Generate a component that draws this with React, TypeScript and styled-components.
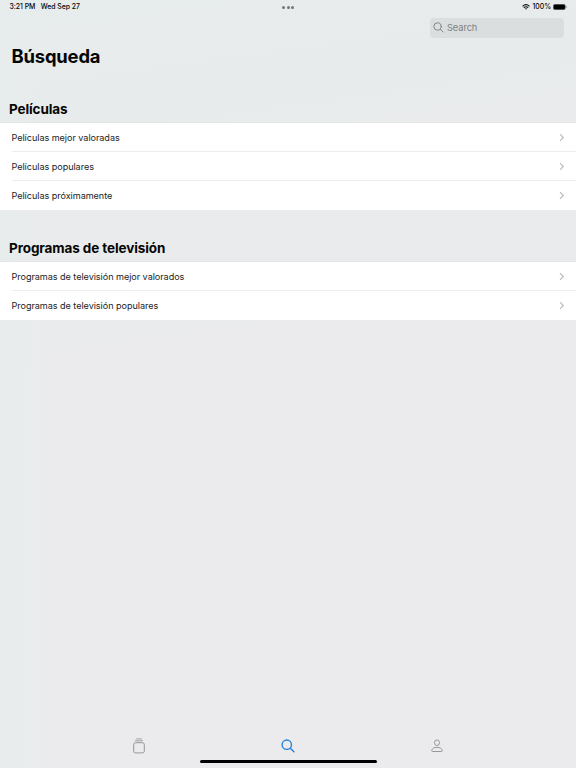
import React from 'react';
import styled, { createGlobalStyle } from 'styled-components';

const GlobalStyle = createGlobalStyle`
  * { box-sizing: border-box; }
  html, body { margin: 0; padding: 0; }
  body { font-family: Inter, "Liberation Sans", sans-serif; color: #050606; overflow: hidden; }
  h1, h2, ul { margin: 0; padding: 0; }
`;

const Screen = styled.div`
  width: 576px;
  height: 768px;
  display: flex;
  flex-direction: column;
  background:
    linear-gradient(90deg, #e7ecec 0, #e7ecec00 46px),
    linear-gradient(172deg, #e7ecec 0, #e8ebec 130px, #eaebec 230px, #ebebed 400px);
`;

const StatusBar = styled.div`
  height: 14px;
  flex: none;
  display: grid;
  grid-template-columns: 1fr auto 1fr;
  align-items: center;
  padding: 0 9px 0 9.5px;
  font-size: 6.9px;
  font-weight: 500;
  line-height: 14px;
`;

const Clock = styled.div`
  display: flex;
  gap: 5.5px;
  letter-spacing: -0.04px;
`;

const Dots = styled.div`
  display: flex;
  gap: 1.6px;
  span { width: 3px; height: 3px; border-radius: 50%; background: #727676; }
`;

const Indicators = styled.div`
  display: flex;
  justify-content: flex-end;
  align-items: center;
  gap: 2px;
`;

const SearchRow = styled.div`
  flex: none;
  display: flex;
  justify-content: flex-end;
  padding: 4px 12px 0 0;
`;

const SearchField = styled.div`
  width: 134px;
  height: 20px;
  border-radius: 4px;
  background: #dadedf;
  color: #7e8283;
  display: flex;
  align-items: center;
  gap: 3px;
  padding: 0 0 1px 3px;
  font-size: 9.3px;
  letter-spacing: -0.1px;
`;

const Title = styled.h1`
  flex: none;
  height: 59px;
  padding: 6px 0 0 11.5px;
  font-size: 18.4px;
  line-height: 24px;
  font-weight: 700;
  letter-spacing: -0.17px;
`;

const Section = styled.section`
  flex: none;
  margin-bottom: 26px;
`;

const SectionTitle = styled.h2`
  height: 25px;
  padding-left: 9px;
  font-size: 13.5px;
  line-height: 24px;
  font-weight: 700;
  letter-spacing: -0.1px;
`;

const List = styled.ul`
  list-style: none;
  background: #fff;
  border-top: 1px solid #e3e5e6;
`;

const Item = styled.li`
  height: 29px;
  display: flex;
  align-items: center;
  justify-content: space-between;
  margin-left: 11.5px;
  padding-right: 11px;
  font-size: 9.1px;
  letter-spacing: -0.05px;
  color: #232425;
  &:not(:last-child) { border-bottom: 1px solid #ececee; }
`;

const TabBar = styled.nav`
  flex: none;
  margin-top: auto;
  height: 30px;
  padding-top: 2px;
  display: grid;
  grid-template-columns: repeat(3, 149px);
  justify-content: center;
  justify-items: center;
  align-items: center;
`;

const HomeBar = styled.div`
  flex: none;
  width: 177px;
  height: 3px;
  border-radius: 2px;
  margin: 0 auto 5px;
  background: #000;
`;

const Chevron = () => (
  <svg width="6" height="9" viewBox="0 0 6 9" fill="none" stroke="#b9b9bc" strokeWidth="1.1">
    <path d="M1 1.2 4.3 4.5 1 7.8" />
  </svg>
);

const Wifi = () => (
  <svg width="8" height="6" viewBox="0 0 8 6" fill="none" stroke="#111" strokeWidth="1.1">
    <path d="M.5 2.3Q4-.9 7.5 2.3M1.8 3.7q2.2-1.8 4.4 0" />
    <path d="M2.9 4.6Q4 3.8 5.1 4.6L4 5.8Z" fill="#111" stroke="none" />
  </svg>
);

const Battery = () => (
  <svg width="14" height="6" viewBox="0 0 14 6">
    <rect x=".3" y=".3" width="12" height="5.4" rx="1.6" fill="#000" stroke="#777" strokeWidth=".5" />
    <path d="M13 2v2q.8-.2.8-1T13 2Z" fill="#888" />
  </svg>
);

const Magnifier = ({ size, color, weight }: { size: number; color: string; weight: number }) => (
  <svg width={size} height={size} viewBox="0 0 14 14" fill="none" stroke={color} strokeWidth={weight} strokeLinecap="round">
    <circle cx="5.8" cy="5.7" r="4.7" />
    <path d="m9.3 9.2 3.6 3.6" />
  </svg>
);

const Library = () => (
  <svg width="14" height="16" viewBox="0 0 14 16" fill="none" stroke="#97979a" strokeWidth="1">
    <rect x="1.7" y="4.7" width="10.6" height="10.2" rx="1.8" />
    <path d="M3 2.8h8M4.2.9h5.6" strokeWidth=".9" />
  </svg>
);

const Person = () => (
  <svg width="14" height="14" viewBox="0 0 14 14" fill="none" stroke="#97979a" strokeWidth="1">
    <ellipse cx="7" cy="3.7" rx="2.5" ry="2.8" />
    <path d="M2.7 12.5q-1.2 0-1-1.1C2.2 9.4 4.2 8.3 7 8.3s4.8 1.1 5.3 3.1q.2 1.1-1 1.1Z" />
  </svg>
);

const sections = [
  { title: 'Películas', items: ['Películas mejor valoradas', 'Películas populares', 'Películas próximamente'] },
  { title: 'Programas de televisión', items: ['Programas de televisión mejor valorados', 'Programas de televisión populares'] },
];

export default function App() {
  return (
    <>
      <GlobalStyle />
      <Screen>
        <StatusBar>
          <Clock><span>3:21 PM</span><span>Wed Sep 27</span></Clock>
          <Dots><span /><span /><span /></Dots>
          <Indicators><Wifi /><span>100%</span><Battery /></Indicators>
        </StatusBar>
        <SearchRow>
          <SearchField><Magnifier size={11} color="#7e8283" weight={1.2} /><span>Search</span></SearchField>
        </SearchRow>
        <Title>Búsqueda</Title>
        {sections.map((section) => (
          <Section key={section.title}>
            <SectionTitle>{section.title}</SectionTitle>
            <List>
              {section.items.map((item) => (
                <Item key={item}><span>{item}</span><Chevron /></Item>
              ))}
            </List>
          </Section>
        ))}
        <TabBar>
          <Library />
          <Magnifier size={14} color="#2581dc" weight={1.4} />
          <Person />
        </TabBar>
        <HomeBar />
      </Screen>
    </>
  );
}
